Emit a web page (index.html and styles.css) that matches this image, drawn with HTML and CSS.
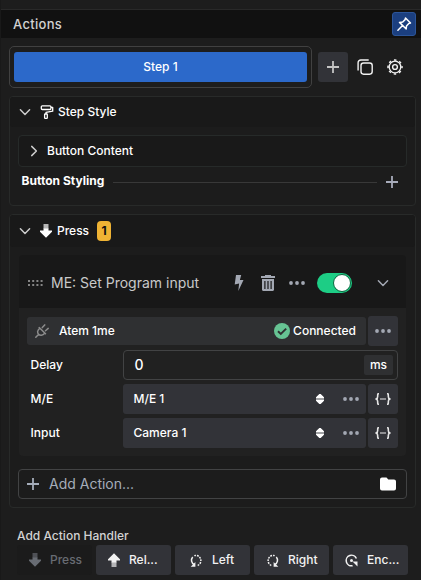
FILE: index.html
```html
<!DOCTYPE html>
<html lang="en">
<head>
<meta charset="utf-8">
<title>Actions</title>
<link rel="stylesheet" href="styles.css">
</head>
<body>
<svg class="symbols" aria-hidden="true">
  <symbol id="chevron" viewBox="0 0 12 12"><path d="M1.400 3.700 6 8.400l4.600-4.700" fill="none" stroke="currentColor" stroke-width="1.500" stroke-linecap="round" stroke-linejoin="round"/></symbol>
  <symbol id="plus" viewBox="0 0 12 12"><path d="M6 0v12M0 6h12" fill="none" stroke="currentColor" stroke-width="1.800"/></symbol>
  <symbol id="dots" viewBox="0 0 16 4"><g fill="currentColor"><circle cx="2" cy="2" r="1.900"/><circle cx="8" cy="2" r="1.900"/><circle cx="14" cy="2" r="1.900"/></g></symbol>
  <symbol id="arrow" viewBox="0 0 12 14"><path d="M3.500 0h5v4.500h-5z" fill="currentColor" opacity=".68"/><path d="M3.500 4.300h5V6.500H12v1.300l-6 5.900-6-5.900V6.500h3.500z" fill="currentColor"/></symbol>
  <symbol id="sort" viewBox="0 0 8 10"><path d="M3.300 0h1.400L8 3.300V4H0v-.7zM0 6h8v.7L4.700 10H3.300L0 6.700z" fill="currentColor"/><path d="M0 4h8v2H0z" fill="currentColor" opacity=".55"/></symbol>
  <symbol id="expr" viewBox="0 0 16 12"><path d="M4 .6C2.500.6 2.700 1.500 2.700 3.200S2.500 5.500 1.300 6c1.200.5 1.400 1.100 1.400 2.800S2.500 11.400 4 11.400M12 .6c1.500 0 1.300.9 1.300 2.600S13.500 5.500 14.700 6c-1.200.5-1.400 1.100-1.400 2.800s.2 2.600-1.300 2.600" fill="none" stroke="currentColor" stroke-width="1.600"/><path d="M5 6h6" stroke="currentColor" stroke-width="1.600" opacity=".65"/></symbol>
  <symbol id="rotate" viewBox="0 0 13 13"><path d="M4.200 10.600A5 5 0 0 1 2.700 2.900" fill="none" stroke="currentColor" stroke-width="1.500"/><path d="M4.300 1.600A5.200 5.200 0 1 1 7 11.700" fill="none" stroke="currentColor" stroke-width="1.500" stroke-dasharray="1.700 1"/><path d="M5.400 8v4.700H.7z" fill="currentColor"/></symbol>
</svg>

<div class="topline"></div>
<header class="titlebar">
  <h1>Actions</h1>
  <button class="pin" aria-label="Pin"><svg viewBox="0 0 16 16" width="16" height="16"><path d="m9.500 2 5 5-1.700.4-2.300 2.500-.3 3.100-6.700-6.600 3.200-.4 2.400-2.400zM6.300 9.800 1.900 14.200" fill="none" stroke="#fff" stroke-width="1.500" stroke-linejoin="round" stroke-linecap="round"/></svg></button>
</header>

<main>
  <div class="steps">
    <div class="tabs"><button class="tab">Step 1</button></div>
    <button class="add-step" aria-label="Add step"><svg width="12" height="12"><use href="#plus"/></svg></button>
    <button class="tool" aria-label="Duplicate"><svg width="16" height="16" viewBox="0 0 16 16" fill="none" stroke="currentColor" stroke-width="1.400"><rect x="4" y="4" width="11.200" height="11.200" rx="2.600"/><path d="M1.100 11.500V3.700A2.700 2.700 0 0 1 3.800 1h7.900"/></svg></button>
    <button class="tool" aria-label="Settings"><svg width="16" height="16" viewBox="0 0 16 16" fill="none" stroke="currentColor"><circle cx="8" cy="8" r="5.800" stroke-width="1.300"/><circle cx="8" cy="8" r="7" stroke-width="1.500" stroke-dasharray="2.500 2.998" stroke-dashoffset="1.250"/><circle cx="8" cy="8" r="2.400" stroke-width="1.400"/></svg></button>
  </div>

  <section class="panel style-panel">
    <div class="panel-head">
      <svg class="chev" width="12" height="12"><use href="#chevron"/></svg>
      <svg class="head-icon" width="14" height="14" viewBox="0 0 14 14" fill="none" stroke="#fff" stroke-width="1.300" stroke-linejoin="round"><rect x="1.300" y=".8" width="9.600" height="3.700" rx="1"/><path d="M11 2.400h1.700v3.800L6 7.400v1.700"/><rect x="4.600" y="9" width="2.700" height="4.300" rx=".6"/></svg>
      <span>Step Style</span>
    </div>
    <div class="style-body">
      <div class="content-row"><svg class="chev side" width="12" height="12"><use href="#chevron"/></svg><span>Button Content</span></div>
      <div class="styling"><b>Button Styling</b><i></i><svg width="12" height="12"><use href="#plus"/></svg></div>
    </div>
  </section>

  <section class="panel press-panel">
    <div class="panel-head press-head">
      <svg class="chev" width="12" height="12"><use href="#chevron"/></svg>
      <svg class="head-icon" width="12" height="14"><use href="#arrow"/></svg>
      <span class="press-name">Press</span><span class="count">1</span>
    </div>
    <article class="action">
      <div class="action-head">
        <svg class="grip" width="15" height="6" viewBox="0 0 15 6"><path d="M0 1h15M0 5h15" stroke="#858585" stroke-width="2" stroke-dasharray="2 2.200"/></svg>
        <h2>ME: Set Program input</h2>
        <svg class="bolt" width="10" height="16" viewBox="0 0 10 16"><path d="M2 0h5.200L5.900 5H9.500L4.300 16l.8-7.500L.7 9.400z" fill="currentColor"/></svg>
        <svg class="trash" width="14" height="16" viewBox="0 0 14 16"><path d="M4 0h6v1h4v2H0V1h4z" fill="currentColor"/><path d="M1 4h12v10.500c0 .9-.6 1.500-1.500 1.500h-9C1.600 16 1 15.400 1 14.500zm2.300 2v8h1.200V6zm3.100 0v8h1.200V6zm3.100 0v8h1.200V6z" fill="currentColor" fill-rule="evenodd"/></svg>
        <svg class="more" width="16" height="4"><use href="#dots"/></svg>
        <span class="toggle"><span></span></span>
        <svg class="collapse" width="12" height="12"><use href="#chevron"/></svg>
      </div>
      <div class="action-body">
        <div class="connection-row">
          <div class="connection">
            <svg width="14" height="14" viewBox="0 0 14 14" fill="none" stroke="#8b8b8b" stroke-width="1.500" stroke-linecap="round"><path d="m4.200 3.500 6.300 6.300M4.800 4.200C2.300 6.300 2.100 8.600 3.600 10.200s4 1.500 6.100-1M7.300 3.600 9.700.9M10.500 6.700l2.700-2.300M3.500 10.400.8 13.200"/></svg>
            <span class="name">Atem 1me</span>
            <svg width="16" height="16" viewBox="0 0 16 16"><circle cx="8" cy="8" r="8" fill="#66c393"/><path d="m4 8.300 2.800 2.700 5.400-5.400" fill="none" stroke="#2f3032" stroke-width="1.900"/></svg>
            <span class="status">Connected</span>
          </div>
          <button class="square dim"><svg width="16" height="4"><use href="#dots"/></svg></button>
        </div>
        <div class="field"><label>Delay</label><div class="input"><span>0</span><span class="unit">ms</span></div></div>
        <div class="field"><label>M/E</label><div class="select"><span>M/E 1</span><svg class="sort" width="8" height="10"><use href="#sort"/></svg><svg class="dim" width="16" height="4"><use href="#dots"/></svg></div><button class="square"><svg width="16" height="12"><use href="#expr"/></svg></button></div>
        <div class="field"><label>Input</label><div class="select"><span>Camera 1</span><svg class="sort" width="8" height="10"><use href="#sort"/></svg><svg class="dim" width="16" height="4"><use href="#dots"/></svg></div><button class="square"><svg width="16" height="12"><use href="#expr"/></svg></button></div>
      </div>
    </article>
    <div class="add-action">
      <svg width="12" height="12"><use href="#plus"/></svg><span>Add Action...</span>
      <svg width="16" height="14" viewBox="0 0 16 14"><path d="M2 .5h4.500L8.300 2.500H14a2 2 0 0 1 2 2v7a2 2 0 0 1-2 2H2a2 2 0 0 1-2-2v-9a2 2 0 0 1 2-2z" fill="#fff"/></svg>
    </div>
  </section>

  <h3>Add Action Handler</h3>
  <div class="handlers">
    <button class="disabled"><svg width="12" height="14"><use href="#arrow"/></svg><span>Press</span></button>
    <button><svg class="up" width="12" height="14"><use href="#arrow"/></svg><span>Rel...</span></button>
    <button class="turn"><svg width="13" height="13"><use href="#rotate"/></svg><span>Left</span></button>
    <button><svg class="mirror" width="13" height="13"><use href="#rotate"/></svg><span>Right</span></button>
    <button><svg width="13" height="13" viewBox="0 0 13 13"><path d="M11.400 4.500A5.300 5.300 0 1 0 7.600 11.700" fill="none" stroke="currentColor" stroke-width="1.500"/><circle cx="6.500" cy="6.500" r="1.500" fill="currentColor"/><path d="M7.500 7.400h5v5z" fill="currentColor"/></svg><span>Enc...</span></button>
  </div>
</main>
</body>
</html>
```

FILE: styles.css
```css
* { box-sizing: border-box; }
body { margin: 0; height: 580px; overflow: hidden; background: #1d1d1d; color: #fff; font: 500 12px/16px Inter, sans-serif; border-left: 1px solid #191919; }
h1, h2, h3 { margin: 0; font-weight: 500; }
button { margin: 0; padding: 0; border: 0; color: inherit; font: inherit; display: flex; align-items: center; justify-content: center; background: none; }
svg { display: block; flex: none; }
.symbols { position: absolute; width: 0; height: 0; }
.topline { height: 10px; border-bottom: 1px solid #292929; }
.titlebar { height: 28px; background: #111; display: flex; align-items: center; justify-content: space-between; padding: 0 5px 0 12px; }
h1 { font-size: 13px; letter-spacing: .3px; color: #d2d2d2; }
.pin { width: 24px; height: 24px; background: #1b3f80; border: 1px solid #2c5599; border-radius: 3px; }
main { padding: 8px 5px 0 8px; }
.steps { display: flex; align-items: center; height: 42px; margin-bottom: 8px; }
.tabs { width: 303px; height: 42px; border: 1px solid #414141; border-radius: 5px; padding: 5px 4px; margin-right: 6px; }
.tab { width: 100%; height: 30px; background: #2c69ca; border-radius: 3px; }
.add-step { width: 30px; height: 30px; background: #323338; border-radius: 3px; color: #c4c4c4; }
.tool { width: 30px; margin-left: 2px; height: 30px; color: #f2f2f2; }
.tool + .tool { margin-left: 0; }
.panel { border: 1px solid #282a29; border-radius: 4px; background: #1c1c1c; }
.style-panel { height: 110px; margin-bottom: 8px; }
.panel-head { height: 30px; background: #191919; border-radius: 3px; display: flex; align-items: center; padding-left: 9px; }
.chev { color: #ccc; }
.head-icon { margin: 0 4px 0 9px; }
.style-body { padding: 8px; }
.content-row { height: 32px; border: 1px solid #262a29; border-radius: 4px; background: #191919; display: flex; align-items: center; padding-left: 9px; }
.content-row span { margin-left: 7px; }
.side { transform: rotate(-90deg); }
.styling { display: flex; align-items: center; height: 30px; padding: 0 9px 0 3.600px; }
.styling b { font-weight: 700; width: 83px; white-space: nowrap; margin: -2px 8px 0 0; }
.styling i { height: 1px; background: #383838; flex: 1; margin-right: 9px; }
.styling svg { color: #a7abba; }
.press-panel { height: 294px; padding-bottom: 8px; }
.press-head { height: 32px; }
.press-name { margin-left: 1px; }
.count { width: 14px; height: 20px; border-radius: 4px; background: #efb334; color: #111; font-weight: 700; line-height: 20px; text-align: center; margin-left: 8px; }
.action { margin: 8px 9px 13px; height: 201px; background: #212121; border-radius: 4px; overflow: hidden; }
.action-head { height: 53px; background: #181818; display: flex; align-items: center; padding: 2px 0 0 9px; color: #a3a8b3; }
h2 { font-size: 14px; width: 183px; margin-left: 8px; color: #c9c9c9; font-weight: 400; white-space: nowrap; }
.trash { margin-left: 17px; }
.more { margin-left: 14px; }
.toggle { width: 35px; height: 20px; border-radius: 10px; background: #1dcd85; margin-left: 12px; display: flex; justify-content: flex-end; padding: 1px; }
.toggle span { width: 18px; height: 18px; border: 1px solid #08683f; border-radius: 50%; background: #fff; }
.collapse { margin-left: 25px; }
.action-body { padding: 8px; display: grid; gap: 4px; }
.connection-row { display: flex; align-items: center; gap: 2px; }
.connection { flex: 1; height: 28px; background: #2f3032; border-radius: 3px; display: flex; align-items: center; padding: 0 10px 0 8px; }
.name { flex: 1; margin-left: 10px; }
.status { margin-left: 3px; }
.square { width: 30px; height: 30px; background: #323338; border-radius: 3px; color: #e5e5e5; flex: none; }
.dim { color: #a3a8b3; }
.field { display: flex; height: 30px; align-items: center; }
.field label { width: 96px; padding-left: 3.600px; flex: none; }
.field .square { margin-left: 2px; }
.input { flex: 1; height: 30px; border: 1px solid #424344; border-radius: 4px; display: flex; align-items: center; justify-content: space-between; padding: 0 4px 0 10.500px; font-size: 14px; }
.unit { width: 29px; height: 20px; line-height: 20px; text-align: center; background: #2f3032; border-radius: 2px; font-size: 12px; }
.select { flex: 1; height: 30px; background: #323338; border-radius: 3px; display: flex; align-items: center; padding: 0 7px 0 10.500px; }
.select span { flex: 1; }
.sort { margin-right: 19px; color: #fff; }
.add-action { height: 30px; margin: 0 8px; border: 1px solid #424344; border-radius: 4px; display: flex; align-items: center; padding: 0 10px 0 8px; color: #a5adba; font-size: 14px; font-weight: 400; }
.add-action span { flex: 1; margin-left: 10px; }
h3 { font-size: 12px; margin: 20px 0 1px 8px; color: #d2d2d2; }
.handlers { display: flex; gap: 4px; margin-left: 8px; }
.handlers button { width: 75px; height: 30px; border-radius: 3px; background: #323338; justify-content: flex-start; padding-left: 12px; color: #f2f2f2; }
.handlers span { margin-left: 9px; }
.handlers .turn { padding-left: 15px; }
.handlers .disabled { background: #1b1b1b; color: #686c73; }
.up { transform: rotate(180deg); }
.mirror { transform: scaleX(-1); }
```
